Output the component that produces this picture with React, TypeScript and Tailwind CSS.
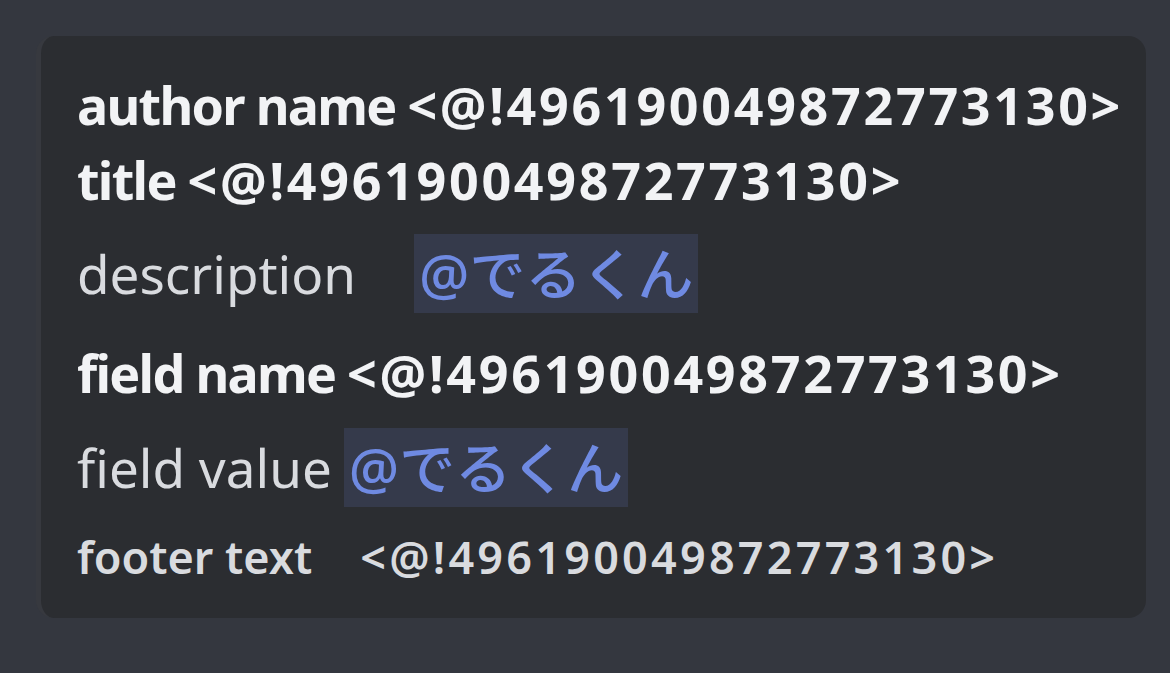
export default function App() {
  const font = { fontFamily: '"Noto Sans", "Noto Sans CJK JP", sans-serif' };
  return (
    <div className="w-[1170px] h-[673px] bg-[#34373f] pt-[36px] pl-[36px]" style={font}>
      <div className="w-[1110px] h-[582px] bg-[#2b2d31] rounded-[18px] border-l-[5px] border-[#37393f] pl-[36px] flex flex-col">
        <div className="mt-[31px] h-[75px] leading-[75px] text-[52px] font-bold text-[#f2f3f5] whitespace-nowrap">
          <span className="tracking-[-1.7px]">author name </span>
          <span className="tracking-[2.7px]">&lt;@!496190049872773130&gt;</span>
        </div>
        <div className="h-[75px] leading-[75px] text-[52px] font-bold text-[#f2f3f5] whitespace-nowrap">
          <span className="tracking-[-1.7px]">title </span>
          <span className="tracking-[2.7px]">&lt;@!496190049872773130&gt;</span>
        </div>
        <div className="mt-[17px] h-[79px] flex items-start text-[53px] font-normal text-[#d9dbdf] whitespace-nowrap">
          <span className="h-[79px] leading-[79px]">description</span>
          <span className="ml-[58px] h-[79px] leading-[79px] bg-[#353a4b] text-[#6f8ae2] px-[5px] text-[56px] font-medium">@でるくん</span>
        </div>
        <div className="mt-[22px] h-[75px] leading-[75px] text-[52px] font-bold text-[#f2f3f5] whitespace-nowrap">
          <span className="tracking-[-1.7px]">field name </span>
          <span className="tracking-[2.7px]">&lt;@!496190049872773130&gt;</span>
        </div>
        <div className="mt-[18px] h-[79px] flex items-start text-[53px] font-normal text-[#d9dbdf] whitespace-nowrap">
          <span className="h-[79px] leading-[79px]">field value</span>
          <span className="ml-[12px] h-[79px] leading-[79px] bg-[#353a4b] text-[#6f8ae2] px-[5px] text-[56px] font-medium">@でるくん</span>
        </div>
        <div className="mt-[20px] h-[60px] leading-[60px] flex items-start text-[45px] font-semibold text-[#d9dbdf] whitespace-nowrap">
          <span>footer text</span>
          <span className="ml-[48px] tracking-[3.2px]">&lt;@!496190049872773130&gt;</span>
        </div>
      </div>
    </div>
  );
}
